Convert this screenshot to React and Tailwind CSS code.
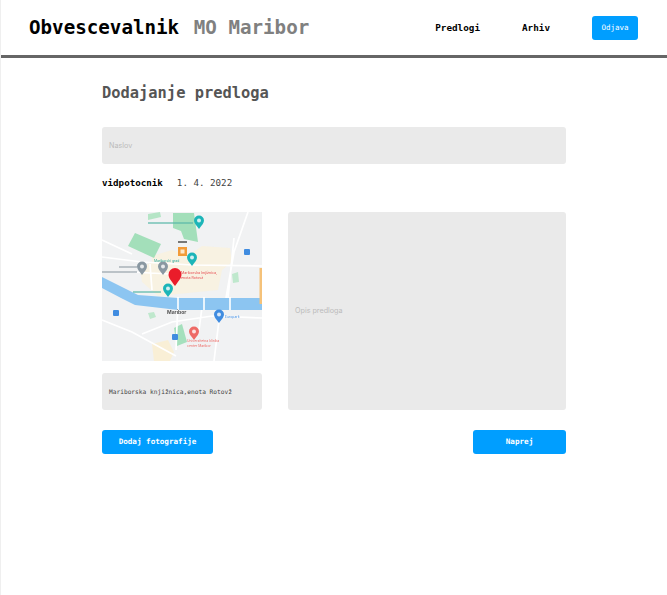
import React from "react";

const mono = "font-['DejaVu_Sans_Mono','Liberation_Mono',monospace]";
const sans = "font-['Inter','Liberation_Sans',sans-serif]";

function Pin({ x, y, color }) {
  return (
    <g>
      <path d={`M${x} ${y + 6}c-3-4-5-6-5-8.5a5 5 0 0110 0c0 2.5-2 4.5-5 8.5z`} fill={color} />
      <circle cx={x} cy={y - 2.5} r="2" fill="#fff" opacity="0.8" />
    </g>
  );
}

// blurry map thumbnail
function MapThumb() {
  return (
    <svg viewBox="0 0 160 149" className="block w-[160px] h-[149px]">
      <defs>
        <filter id="soft">
          <feGaussianBlur stdDeviation="0.7" />
        </filter>
      </defs>
      <g filter="url(#soft)" fontFamily="Inter, sans-serif">
        <rect width="160" height="149" fill="#f1f2f3" />
        {/* built up area */}
        <path d="M50 44l20-6 16 6 14-10 28 2 2 14-10 8-4 20-60 6-16-14-2-14 12-6z" fill="#faf1dc" opacity="0.75" />
        <path d="M50 132l16-4 6 12-4 9H52z" fill="#f9efd6" />
        {/* parks */}
        <path d="M71 1h21l4 29-14-3-3-8-8-3z" fill="#a3dfba" />
        <path d="M46 2l12-2 1 5-13 3z" fill="#b5e5c6" />
        <path d="M33 21l26 11-7 14-26-12z" fill="#a3dfba" />
        <path d="M72 116l8-4 5 18-10 4z" fill="#a5e0bd" />
        <path d="M46 101l6-1 2 5-6 2z" fill="#bfe8cd" />
        <path d="M130 62l6-2 1 10-6 1z" fill="#bfe8cd" />
        {/* roads */}
        <path d="M0 45l40 5 50 3 70 1M28 60l40 2M0 108l30 12 44 24M40 122l30-12 40-6 50 2M76 88l-2 50M101 88l-4 30M126 86l6-60M146 0l-14 40-8 46M0 28l30 14M48 52l2 26M118 100l-6 49"
          stroke="#fff" strokeWidth="1.7" fill="none" />
        {/* river */}
        <path d="M0 65l16 8 20 10 40 3h84v12H76l-43-5-14-7-19-10z" fill="#8cc5f1" />
        <path d="M76 85v13M102 85v13M128 85v13" stroke="#fff" strokeWidth="1.6" />
        <rect x="157.5" y="56" width="2.5" height="36" fill="#f5c27a" />
        {/* poi */}
        <rect x="76" y="35" width="9" height="9" fill="#f29b38" />
        <rect x="78.5" y="37.5" width="4" height="4" fill="#fde7c9" />
        <path d="M76 30h9" stroke="#777" strokeWidth="2" />
        <Pin x={97} y={11} color="#1fb5b8" />
        <Pin x={90} y={48} color="#1fb5b8" />
        <Pin x={66} y={79} color="#1fb5b8" />
        <Pin x={40} y={57} color="#8a98a2" />
        <Pin x={61} y={57} color="#8a98a2" />
        <Pin x={117} y={105} color="#3f8ce0" />
        <Pin x={92} y={122} color="#ee6b66" />
        <rect x="142" y="37" width="6" height="6" rx="1" fill="#3f8ce0" />
        <rect x="11" y="98" width="6" height="6" rx="1" fill="#3f8ce0" />
        <rect x="70" y="122" width="6" height="6" rx="1" fill="#3f8ce0" />
        <path d="M73 74c-4.5-6-6.5-8.5-6.5-11.5a6.5 6.5 0 0113 0c0 3-2 5.5-6.5 11.5z" fill="#ea1d2c" />
        {/* labels */}
        <text x="79" y="62" fontSize="3.6" fill="#e5484d">Mariborska knjižnica,</text>
        <text x="79" y="67" fontSize="3.6" fill="#e5484d">enota Rotovž</text>
        <text x="85" y="130" fontSize="3.4" fill="#ee6b66">Univerzitetna klinika</text>
        <text x="85" y="135" fontSize="3.4" fill="#ee6b66">center Maribor</text>
        <text x="65" y="102" fontSize="5" fontWeight="700" fill="#555">Maribor</text>
        <text x="123" y="106" fontSize="3.4" fill="#3f8ce0">Europark</text>
        <text x="52" y="50" fontSize="3.4" fill="#2aa89c">Mariborski grad</text>
        <path d="M46 11h45M31 80h28" stroke="#55b8a8" strokeWidth="1.5" opacity="0.8" />
        <path d="M17 55h18M0 60h35" stroke="#98a2aa" strokeWidth="1.5" opacity="0.8" />
      </g>
    </svg>
  );
}

export default function App() {
  return (
    <div className={`${mono} min-h-[595px] bg-white border-l border-[#efefef]`}>
      <header className="h-[58px] border-b-[3px] border-[#666666] flex items-center pl-[28px] pr-[28px]">
        <h1 className="mt-[1px] text-[19.2px] font-bold text-black">
          Obvescevalnik <span className="ml-[3px] text-[#808080]">MO Maribor</span>
        </h1>
        <nav className="ml-auto mr-[1px] flex items-center text-[9.3px] font-bold text-black">
          <a>Predlogi</a>
          <a className="ml-[42px]">Arhiv</a>
          <button className="ml-[42px] w-[46px] h-[24px] rounded-[3px] bg-[#009eff] text-white font-normal text-[7.5px]">
            Odjava
          </button>
        </nav>
      </header>

      <main className="w-[464px] ml-[101px]">
        <h2 className="mt-[25px] text-[15.4px] leading-[20px] font-bold text-[#555555]">Dodajanje predloga</h2>

        <div className={`${sans} mt-[24px] h-[37px] rounded-[3px] bg-[#eaeaea] flex items-center pl-[7px] pt-[1px] text-[7.2px] text-[#bbbbbb]`}>
          Naslov
        </div>

        <div className="mt-[13px] flex items-center h-[12px] text-[9.2px]">
          <span className="font-bold text-black">vidpotocnik</span>
          <span className="ml-[14px] text-[#444444]">1. 4. 2022</span>
        </div>

        <div className="mt-[23px] flex justify-between">
          <div className="w-[160px]">
            <MapThumb />
            <div className="mt-[12px] h-[37px] rounded-[3px] bg-[#eaeaea] flex items-center pl-[7px] text-[6.2px] text-[#444444]">
              Mariborska knjižnica,enota Rotovž
            </div>
          </div>
          <div className={`${sans} w-[278px] h-[198px] rounded-[3px] bg-[#eaeaea] flex items-center pl-[7px] pt-[1px] text-[7.2px] text-[#bbbbbb]`}>
            Opis predloga
          </div>
        </div>

        <div className="mt-[20px] flex justify-between">
          <button className="w-[111px] h-[24px] rounded-[3px] bg-[#009eff] text-white font-bold text-[7.6px]">
            Dodaj fotografije
          </button>
          <button className="w-[93px] h-[24px] rounded-[3px] bg-[#009eff] text-white font-bold text-[7.6px]">
            Naprej
          </button>
        </div>
      </main>
    </div>
  );
}
